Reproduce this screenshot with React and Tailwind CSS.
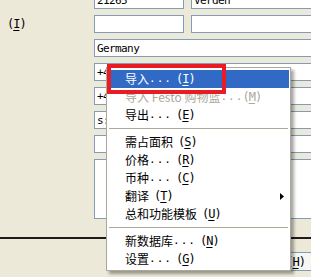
import React from 'react';

const mono = "font-[family-name:'DejaVu_Sans_Mono',monospace] text-[11px] tracking-[-0.6px]";
const cjk = "font-[family-name:'Noto_Sans_CJK_SC',sans-serif] text-[12px]";

function Field({ text, className = '' }) {
  return (
    <div className={`h-[18px] border border-[#7f9db9] bg-white pl-[2px] flex items-center overflow-hidden whitespace-nowrap leading-none ${mono} ${className}`}>
      {text}
    </div>
  );
}

function Key({ k }) {
  return (
    <span className={`${mono} text-[12px] tracking-[-1px]`}>
      (<span className="underline underline-offset-[2px]">{k}</span>)
    </span>
  );
}

const items = [
  { label: '导入', dots: true, k: 'I', active: true },
  { label: '导入 Festo 购物篮', dots: true, k: 'M', disabled: true },
  { label: '导出', dots: true, k: 'E' },
  'sep',
  { label: '需占面积', k: 'S' },
  { label: '价格', dots: true, k: 'R' },
  { label: '币种', dots: true, k: 'C' },
  { label: '翻译', k: 'T', sub: true },
  { label: '总和功能模板', k: 'U' },
  'sep',
  { label: '新数据库', dots: true, k: 'N' },
  { label: '设置', dots: true, k: 'G' },
];

function MenuItem({ it }) {
  const color = it.active
    ? 'bg-[#316ac5] text-white'
    : it.disabled
      ? 'text-[#aca899] [text-shadow:1px_1px_0_#fff]'
      : 'text-black';
  return (
    <div className={`flex items-center h-[18px] pl-[17px] whitespace-nowrap ${cjk} leading-[18px] ${color}`}>
      <span>{it.label}</span>
      {it.dots
        ? <span className={`${mono} tracking-[1px] ${it.disabled ? 'w-[22px]' : 'w-[27px]'}`}>...</span>
        : <span className="w-[5px]" />}
      <Key k={it.k} />
      {it.sub && (
        <svg className="ml-auto mr-[5px]" width="4" height="7" viewBox="0 0 4 7">
          <polygon points="0,0 4,3.5 0,7" fill="#000" />
        </svg>
      )}
    </div>
  );
}

export default function App() {
  return (
    <div className="relative w-[311px] h-[277px] overflow-hidden bg-[#ece9d8]">
      <div className="w-[340px] flex flex-col gap-[6px] mt-[-9px]">
        <div className="flex">
          <div className="w-[94px] shrink-0" />
          <Field text="21265" className="w-[90px]" />
          <Field text="Verden" className="ml-[7px] flex-1" />
        </div>
        <div className="flex">
          <div className="w-[94px] shrink-0 pl-[7px] flex items-center">
            <Key k="I" />
          </div>
          <Field text="" className="w-[90px]" />
          <Field text="" className="ml-[7px] flex-1" />
        </div>
        <div className="flex">
          <div className="w-[94px] shrink-0" />
          <Field text="Germany" className="flex-1" />
        </div>
        <div className="flex">
          <div className="w-[94px] shrink-0" />
          <Field text="+49 4231 960" className="flex-1" />
        </div>
        <div className="flex">
          <div className="w-[94px] shrink-0" />
          <Field text="+49 4231 961" className="flex-1" />
        </div>
        <div className="flex">
          <div className="w-[94px] shrink-0" />
          <Field text="s:verden" className="flex-1" />
        </div>
        <div className="flex">
          <div className="w-[94px] shrink-0" />
          <Field text="" className="flex-1" />
        </div>
        <div className="flex">
          <div className="w-[94px] shrink-0" />
          <div className="flex-1 h-[60px] border border-[#7f9db9] bg-white" />
        </div>
      </div>

      <div className="mt-[18px] h-[2px] bg-[#1c1c1c]" />

      <div className="mt-[13px] flex justify-end">
        <div className={`w-[75px] h-[19px] mr-[-10px] border border-[#7f9db9] bg-[#f6f6f2] flex items-center justify-center ${cjk} leading-none`}>
          帮助<Key k="H" />
        </div>
      </div>

      <div className="absolute left-[106px] top-[67px] w-[185px] h-[204px] bg-white border border-[#aca899] py-[2px] px-[1px] shadow-[3px_3px_3px_rgba(0,0,0,0.35)]">
        {items.map((it, i) =>
          it === 'sep' ? (
            <div key={i} className="h-[9px] flex items-center px-[1px]">
              <div className="h-[1px] w-full bg-[#aca899]" />
            </div>
          ) : (
            <MenuItem key={i} it={it} />
          )
        )}
      </div>

      <div className="absolute left-[107px] top-[64px] w-[119px] h-[30px] border-[4px] border-[#e81c24]" />
    </div>
  );
}
